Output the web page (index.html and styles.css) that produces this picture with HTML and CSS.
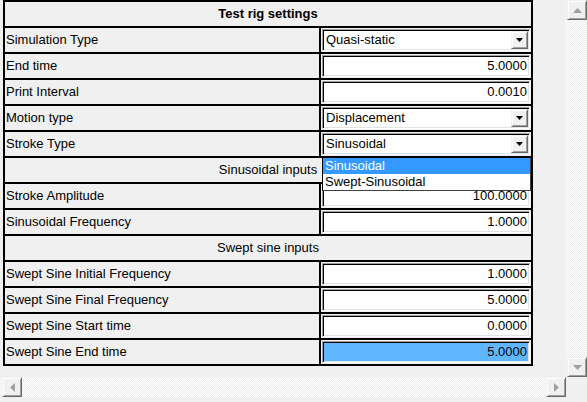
FILE: index.html
```html
<!DOCTYPE html>
<html>
<head>
<meta charset="utf-8">
<link rel="stylesheet" href="styles.css">
</head>
<body>
<div class="window">
  <div class="viewport">
    <div class="grid">
      <div class="cell span head">Test rig settings</div>

      <div class="cell label">Simulation Type</div>
      <div class="cell value"><div class="field combo"><span class="combo-text">Quasi-static</span><span class="drop-btn"><svg width="7" height="4" viewBox="0 0 7 4"><polygon points="0,0 7,0 3.5,4" fill="#000"/></svg></span></div></div>

      <div class="cell label">End time</div>
      <div class="cell value"><div class="field num">5.0000</div></div>

      <div class="cell label">Print Interval</div>
      <div class="cell value"><div class="field num">0.0010</div></div>

      <div class="cell label">Motion type</div>
      <div class="cell value"><div class="field combo"><span class="combo-text">Displacement</span><span class="drop-btn"><svg width="7" height="4" viewBox="0 0 7 4"><polygon points="0,0 7,0 3.5,4" fill="#000"/></svg></span></div></div>

      <div class="cell label">Stroke Type</div>
      <div class="cell value has-list"><div class="field combo"><span class="combo-text">Sinusoidal</span><span class="drop-btn"><svg width="7" height="4" viewBox="0 0 7 4"><polygon points="0,0 7,0 3.5,4" fill="#000"/></svg></span></div>
        <div class="droplist">
          <div class="item sel">Sinusoidal</div>
          <div class="item">Swept-Sinusoidal</div>
        </div>
      </div>

      <div class="cell span">Sinusoidal inputs</div>

      <div class="cell label">Stroke Amplitude</div>
      <div class="cell value"><div class="field num">100.0000</div></div>

      <div class="cell label">Sinusoidal Frequency</div>
      <div class="cell value"><div class="field num">1.0000</div></div>

      <div class="cell span">Swept sine inputs</div>

      <div class="cell label">Swept Sine Initial Frequency</div>
      <div class="cell value"><div class="field num">1.0000</div></div>

      <div class="cell label">Swept Sine Final Frequency</div>
      <div class="cell value"><div class="field num">5.0000</div></div>

      <div class="cell label">Swept Sine Start time</div>
      <div class="cell value"><div class="field num">0.0000</div></div>

      <div class="cell label">Swept Sine End time</div>
      <div class="cell value"><div class="field num selected">5.0000</div></div>
    </div>
  </div>

  <div class="vbar">
    <div class="sbtn"><svg width="9" height="5" viewBox="0 0 9 5"><polygon points="0,5 9,5 4.5,0" fill="#a0a0a0"/></svg></div>
    <div class="sbtn"><svg width="9" height="5" viewBox="0 0 9 5"><polygon points="0,0 9,0 4.5,5" fill="#a0a0a0"/></svg></div>
  </div>

  <div class="hbar">
    <div class="sbtn"><svg width="5" height="9" viewBox="0 0 5 9"><polygon points="5,0 5,9 0,4.5" fill="#a0a0a0"/></svg></div>
    <div class="sbtn"><svg width="5" height="9" viewBox="0 0 5 9"><polygon points="0,0 0,9 5,4.5" fill="#a0a0a0"/></svg></div>
  </div>

  <div class="corner"></div>
</div>
</body>
</html>
```

FILE: styles.css
```css
* { box-sizing: border-box; }

html, body {
  margin: 0;
  padding: 0;
}

body {
  background: #f0f0f0;
  font-family: "Liberation Sans", Arial, sans-serif;
  font-size: 13px;
  color: #000;
  width: 587px;
  height: 402px;
  overflow: hidden;
}

.window {
  display: grid;
  grid-template-columns: 566px 21px;
  grid-template-rows: 377px 21px;
}

.viewport {
  padding-left: 3px;
  overflow: hidden;
}

.grid {
  display: grid;
  grid-template-columns: 314px 210px;
  grid-auto-rows: 24px;
  gap: 2px;
  padding: 2px;
  background: #000;
  width: 530px;
}

.cell {
  background: #f0f0f0;
  line-height: 24px;
  white-space: nowrap;
}

.span {
  grid-column: 1 / -1;
  text-align: center;
}

.head {
  font-weight: bold;
}

.label {
  padding-left: 1px;
}

.value {
  padding: 1px;
}

.has-list {
  position: relative;
  z-index: 2;
}

.field {
  height: 22px;
  width: 208px;
  background: #fff;
  border: 1px solid;
  border-color: #a0a0a0 #fff #fff #a0a0a0;
  box-shadow: inset 1px 1px 0 #000, inset -1px -1px 0 #e3e3e3;
  padding: 1px;
  line-height: 18px;
}

.num {
  text-align: right;
  padding-right: 2px;
}

.selected {
  background: #60b6ff;
}

.combo {
  display: flex;
}

.combo-text {
  flex: 1;
  padding-left: 2px;
}

.drop-btn {
  width: 17px;
  height: 18px;
  background: #f0f0f0;
  border: 1px solid;
  border-color: #f0f0f0 #696969 #696969 #f0f0f0;
  box-shadow: inset 1px 1px 0 #fff, inset -1px -1px 0 #a0a0a0;
  display: flex;
  align-items: center;
  justify-content: center;
}

.droplist {
  position: absolute;
  left: 1px;
  top: 25px;
  width: 209px;
  background: #fff;
  border: 1px solid #000;
  border-right-color: #404040;
  border-bottom-color: #404040;
}

.item {
  height: 16px;
  line-height: 16px;
  padding-left: 2px;
}

.item.sel {
  background: #3399ff;
  color: #fff;
}

.vbar {
  display: flex;
  flex-direction: column;
  justify-content: space-between;
  padding-left: 1px;
  background: repeating-conic-gradient(#fff 0 25%, #ececec 0 50%) 0 0 / 2px 2px;
}

.hbar {
  display: flex;
  justify-content: space-between;
  align-items: flex-start;
  padding-left: 2px;
  background: repeating-conic-gradient(#fff 0 25%, #ececec 0 50%) 0 0 / 2px 2px;
  height: 20px;
}

.sbtn {
  width: 20px;
  height: 20px;
  background: #f0f0f0;
  border: 1px solid;
  border-color: #f0f0f0 #696969 #696969 #f0f0f0;
  box-shadow: inset 1px 1px 0 #fff, inset -1px -1px 0 #a0a0a0;
  display: flex;
  align-items: center;
  justify-content: center;
}

.corner {
  background: #f0f0f0;
}
```
